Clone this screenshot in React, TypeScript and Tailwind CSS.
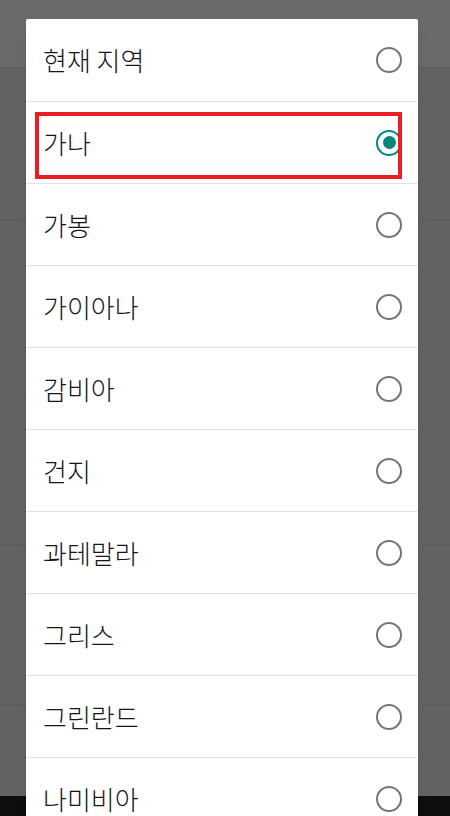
import React from "react";

const REGIONS = [
  "현재 지역",
  "가나",
  "가봉",
  "가이아나",
  "감비아",
  "건지",
  "과테말라",
  "그리스",
  "그린란드",
  "나미비아",
];

const SELECTED = "가나";

function Radio({ checked }: { checked: boolean }) {
  return checked ? (
    <span className="flex h-[26px] w-[26px] items-center justify-center rounded-full border-[2.5px] border-[#00897b]">
      <span className="h-[13px] w-[13px] rounded-full bg-[#00897b]" />
    </span>
  ) : (
    <span className="block h-[26px] w-[26px] rounded-full border-[2.5px] border-[#757575]" />
  );
}

export default function App() {
  return (
    <div
      className="relative h-[816px] w-[450px] overflow-hidden bg-[#636363]"
      style={{ fontFamily: '"Noto Sans CJK KR", "Noto Sans", Roboto, sans-serif' }}
    >
      {/* dimmed page behind the dialog */}
      <div className="flex h-full flex-col">
        <div className="h-[68px] border-b border-[#5a5a5a] bg-[#6a6a6a]" />
        <div className="flex flex-1 flex-col">
          <div className="h-[152px] border-b border-[#5b5b5b]" />
          <div className="h-[325px] border-b border-[#5b5b5b]" />
          <div className="h-[160px] border-b border-[#5b5b5b]" />
          <div className="flex-1" />
        </div>
        <div className="h-[20px] bg-[#0e0e0e]" />
      </div>

      {/* dialog */}
      <div className="absolute left-[26px] top-[19px] w-[392px] rounded-t-[2px] bg-white shadow-lg">
        {REGIONS.map((name, i) => (
          <div
            key={name}
            className={`relative flex h-[82px] items-center justify-between pl-[17px] pr-[16px] ${
              i === 0 ? "h-[81px]" : "border-t border-[#e2e2e2]"
            }`}
          >
            <span className="text-[26px] font-light leading-none text-[#161616]">{name}</span>
            <Radio checked={name === SELECTED} />
            {name === SELECTED && (
              <div className="pointer-events-none absolute left-[9px] top-[10px] h-[67px] w-[367px] border-[4px] border-[#ec1c24]" />
            )}
          </div>
        ))}
      </div>
    </div>
  );
}
